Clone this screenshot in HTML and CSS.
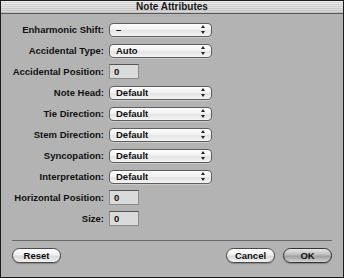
FILE: index.html
```html
<!DOCTYPE html>
<html lang="en">
<head>
    <meta charset="UTF-8">
    <title>Note Attributes</title>
    <link rel="stylesheet" href="styles.css">
</head>
<body>
    <div class="window">
        <div class="titlebar">Note Attributes</div>

        <div class="form">
            <label>Enharmonic Shift:</label>
            <div class="popup"><span>–</span><i class="arrows"></i></div>

            <label>Accidental Type:</label>
            <div class="popup"><span>Auto</span><i class="arrows"></i></div>

            <label>Accidental Position:</label>
            <div class="field">0</div>

            <label>Note Head:</label>
            <div class="popup"><span>Default</span><i class="arrows"></i></div>

            <label>Tie Direction:</label>
            <div class="popup"><span>Default</span><i class="arrows"></i></div>

            <label>Stem Direction:</label>
            <div class="popup"><span>Default</span><i class="arrows"></i></div>

            <label>Syncopation:</label>
            <div class="popup"><span>Default</span><i class="arrows"></i></div>

            <label>Interpretation:</label>
            <div class="popup"><span>Default</span><i class="arrows"></i></div>

            <label>Horizontal Position:</label>
            <div class="field">0</div>

            <label>Size:</label>
            <div class="field">0</div>
        </div>

        <div class="footer">
            <hr class="sep">
            <div class="buttons">
                <button class="btn">Reset</button>
                <div class="right">
                    <button class="btn">Cancel</button>
                    <button class="btn default">OK</button>
                </div>
            </div>
        </div>
    </div>
</body>
</html>
```

FILE: styles.css
```css
html, body { margin: 0; padding: 0; }
body {
    width: 344px; height: 278px; overflow: hidden;
    font-family: 'Liberation Sans', Arial, sans-serif;
    font-size: 9.5px; font-weight: bold; color: #111;
}
.window {
    box-sizing: border-box; width: 344px; height: 278px;
    background: #b3b3b3; border: 1px solid #1c1c1c;
}
.titlebar {
    height: 12px; line-height: 12px; text-align: center;
    font-size: 10px; color: #1a1a1a;
    background:
        repeating-linear-gradient(to bottom, rgba(255,255,255,0.35) 0 1px, rgba(0,0,0,0.04) 1px 2px),
        linear-gradient(to bottom, #e4e4e4, #c4c4c4);
    border-bottom: 1px solid #5a5a5a;
}
.form {
    display: grid; grid-template-columns: 103px 103px;
    grid-auto-rows: 21px; column-gap: 5px; align-items: center;
    margin-top: 5px;
}
.form label { text-align: right; }
.popup {
    box-sizing: border-box; height: 14px; width: 103px;
    display: flex; align-items: center; justify-content: space-between;
    padding: 0 5px 0 6px;
    border: 1px solid #5e5e5e; border-radius: 4px;
    background: linear-gradient(to bottom, #fdfdfd 0%, #f2f2f2 45%, #e4e4e4 55%, #f4f4f4 100%);
    box-shadow: 0 1px 0 rgba(255,255,255,0.3);
}
.popup span { line-height: 12px; }
.arrows { position: relative; width: 5px; height: 9px; }
.arrows::before, .arrows::after {
    content: ''; position: absolute; left: 0;
    border-left: 2.5px solid transparent; border-right: 2.5px solid transparent;
}
.arrows::before { top: 0; border-bottom: 3px solid #222; }
.arrows::after { bottom: 0; border-top: 3px solid #222; }
.field {
    box-sizing: border-box; width: 30px; height: 15px;
    padding: 0 4px; line-height: 13px; font-weight: bold;
    background: #dadada;
    border: 1px solid #8a8a8a; border-top-color: #555;
}
.footer { padding: 0 11px 0 11px; }
.sep {
    margin: 11px 0 0; border: none; height: 1px; background: #6b6b6b;
}
.buttons {
    display: flex; justify-content: space-between; align-items: center;
    margin-top: 7px;
}
.right { display: flex; gap: 8px; }
.btn {
    box-sizing: border-box; width: 49px; height: 15px; padding: 0;
    font-family: 'Liberation Sans', Arial, sans-serif; font-size: 9.5px; font-weight: bold;
    color: #111; line-height: 13px;
    border: 1px solid #4a4a4a; border-radius: 8px;
    background: linear-gradient(to bottom, #ffffff 0%, #f0f0f0 45%, #d9d9d9 55%, #f2f2f2 100%);
    box-shadow: 0 1px 1px rgba(0,0,0,0.25);
}
.btn.default {
    background: linear-gradient(to bottom, #e8e8e8 0%, #bcbcbc 45%, #9e9e9e 55%, #d2d2d2 100%);
    border-color: #333;
}
```
